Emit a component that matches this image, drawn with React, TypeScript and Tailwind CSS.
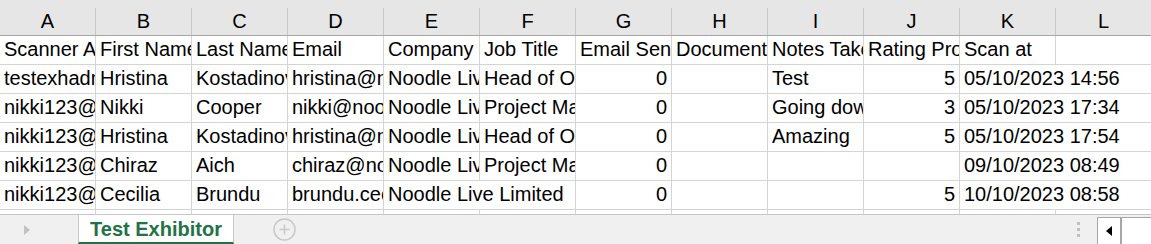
const cols = ["A", "B", "C", "D", "E", "F", "G", "H", "I", "J", "K", "L"];

type Cell = { v?: string; num?: boolean; span?: number };

// one entry per sheet row, spans let text overflow into the empty cell beside it
const rows: Cell[][] = [
  [
    { v: "Scanner Address" },
    { v: "First Name" },
    { v: "Last Name" },
    { v: "Email" },
    { v: "Company" },
    { v: "Job Title" },
    { v: "Email Sent" },
    { v: "Documents" },
    { v: "Notes Taken" },
    { v: "Rating Provided" },
    { v: "Scan at" },
    {},
  ],
  [
    { v: "testexhadmin@noodle.live" },
    { v: "Hristina" },
    { v: "Kostadinova" },
    { v: "hristina@noodle.live" },
    { v: "Noodle Live Limited" },
    { v: "Head of Operations" },
    { v: "0", num: true },
    {},
    { v: "Test" },
    { v: "5", num: true },
    { v: "05/10/2023 14:56", span: 2 },
  ],
  [
    { v: "nikki123@noodle.live" },
    { v: "Nikki" },
    { v: "Cooper" },
    { v: "nikki@noodle.live" },
    { v: "Noodle Live Limited" },
    { v: "Project Manager" },
    { v: "0", num: true },
    {},
    { v: "Going down well" },
    { v: "3", num: true },
    { v: "05/10/2023 17:34", span: 2 },
  ],
  [
    { v: "nikki123@noodle.live" },
    { v: "Hristina" },
    { v: "Kostadinova" },
    { v: "hristina@noodle.live" },
    { v: "Noodle Live Limited" },
    { v: "Head of Operations" },
    { v: "0", num: true },
    {},
    { v: "Amazing" },
    { v: "5", num: true },
    { v: "05/10/2023 17:54", span: 2 },
  ],
  [
    { v: "nikki123@noodle.live" },
    { v: "Chiraz" },
    { v: "Aich" },
    { v: "chiraz@noodle.live" },
    { v: "Noodle Live Limited" },
    { v: "Project Manager" },
    { v: "0", num: true },
    {},
    {},
    {},
    { v: "09/10/2023 08:49", span: 2 },
  ],
  [
    { v: "nikki123@noodle.live" },
    { v: "Cecilia" },
    { v: "Brundu" },
    { v: "brundu.cecilia@noodle.live" },
    { v: "Noodle Live Limited", span: 2 },
    { v: "0", num: true },
    {},
    {},
    { v: "5", num: true },
    { v: "10/10/2023 08:58", span: 2 },
  ],
  [{}, {}, {}, {}, {}, {}, {}, {}, {}, {}, {}, {}],
];

function SheetRow({ cells }: { cells: Cell[] }) {
  return (
    <div className="grid h-[29px] shrink-0 grid-cols-[repeat(12,96px)]">
      {cells.map((c, i) => (
        <div
          key={i}
          className={
            "overflow-hidden whitespace-nowrap border-r border-b border-[#d4d4d4] leading-[27px] " +
            (c.num ? "pr-[4px] text-right" : "pl-[4px]") +
            (c.span === 2 ? " col-span-2" : "")
          }
        >
          {c.v}
        </div>
      ))}
    </div>
  );
}

export default function App() {
  return (
    <div
      className="flex h-[244px] w-[1151px] flex-col overflow-hidden bg-white text-[20px] text-black"
      style={{ fontFamily: '"Liberation Sans", Arial, sans-serif' }}
    >
      <div className="shrink-0 border-b border-[#a6a6a6] bg-[#e6e6e6] pt-[8px]">
        <div className="grid grid-cols-[repeat(12,96px)]">
          {cols.map((c) => (
            <div
              key={c}
              className="h-[27px] border-r border-[#c8c8c8] text-center leading-[27px]"
            >
              {c}
            </div>
          ))}
        </div>
      </div>

      <div className="flex min-h-0 flex-1 flex-col overflow-hidden">
        {rows.map((r, i) => (
          <SheetRow key={i} cells={r} />
        ))}
      </div>

      <div className="flex h-[30px] shrink-0 items-stretch border-t border-[#c6c6c6] bg-[#f0f0f0]">
        <div className="flex w-[78px] items-center pl-[24px]">
          <svg width="6" height="10" viewBox="0 0 6 10">
            <path d="M0 0 L6 5 L0 10 Z" fill="#c2c2c2" />
          </svg>
        </div>
        <div className="flex w-[156px] items-center justify-center border-x border-b-2 border-x-[#c6c6c6] border-b-[#217346] bg-white font-bold text-[#217346]">
          Test Exhibitor
        </div>
        <div className="flex items-center pl-[39px]">
          <svg width="23" height="23" viewBox="0 0 23 23">
            <circle cx="11.5" cy="11.5" r="10.5" fill="none" stroke="#c8c8c8" strokeWidth="1.5" />
            <path d="M11.5 6.5 V16.5 M6.5 11.5 H16.5" stroke="#c8c8c8" strokeWidth="1.5" />
          </svg>
        </div>
        <div className="flex-1" />
        <div className="flex flex-col justify-center gap-[3px] pr-[17px]">
          <span className="block h-[3px] w-[3px] bg-[#c0c0c0]" />
          <span className="block h-[3px] w-[3px] bg-[#c0c0c0]" />
          <span className="block h-[3px] w-[3px] bg-[#c0c0c0]" />
        </div>
        <div className="mt-[2px] flex w-[54px] border-t border-l border-[#a6a6a6] bg-white">
          <div className="flex w-[24px] items-center justify-center border-r-2 border-[#a6a6a6]">
            <svg width="6" height="10" viewBox="0 0 6 10">
              <path d="M6 0 L0 5 L6 10 Z" fill="#000" />
            </svg>
          </div>
        </div>
      </div>
    </div>
  );
}
